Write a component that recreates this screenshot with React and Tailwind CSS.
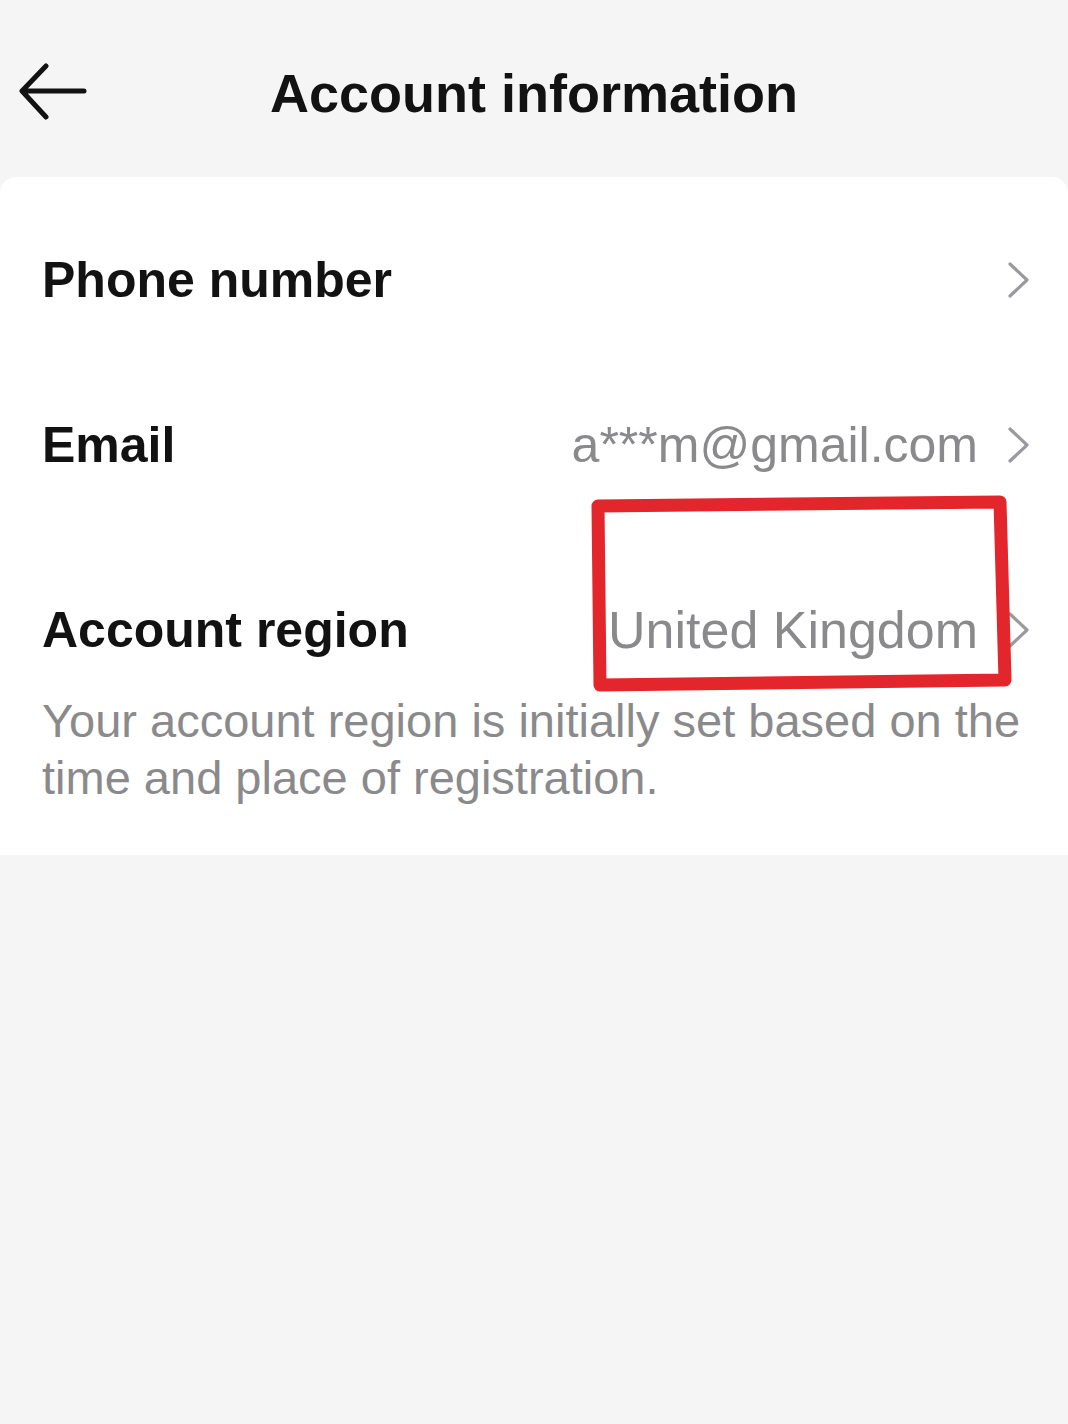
import React from 'react'

const font = { fontFamily: '"Liberation Sans", Arial, sans-serif' }

function Chevron() {
  return (
    <svg width="26" height="38" viewBox="0 0 26 38" fill="none" className="shrink-0">
      <polyline points="4,3 21,19 4,35" stroke="#9a9a9e" strokeWidth="3.2" strokeLinecap="round" strokeLinejoin="round" />
    </svg>
  )
}

function Row({ label, value, valueSize = 'text-[50px]', className = '' }) {
  return (
    <div className={`flex items-center justify-between pl-[42px] pr-[36px] ${className}`}>
      <span className="text-[50px] font-bold leading-none text-[#121212]">{label}</span>
      <div className="flex items-center gap-[28px]">
        {value && <span className={`${valueSize} leading-none text-[#8a8a8c]`}>{value}</span>}
        <Chevron />
      </div>
    </div>
  )
}

export default function App() {
  return (
    <div className="min-h-[1424px] w-full bg-[#f5f5f5]" style={font}>
      {/* header */}
      <div className="grid h-[177px] grid-cols-[1fr_auto_1fr] items-center pt-[8px]">
        <div className="pl-[18px]">
          <svg width="70" height="60" viewBox="0 0 70 60" fill="none">
            <path d="M66 28H5M28 3L4 28L28 54" stroke="#121212" strokeWidth="5" strokeLinecap="round" strokeLinejoin="round" />
          </svg>
        </div>
        <h1 className="text-[54px] font-bold leading-none text-[#121212]">Account information</h1>
        <div />
      </div>

      {/* panel */}
      <div className="relative rounded-t-[16px] bg-white pt-[20px] pb-[49px]">
        <Row label="Phone number" className="h-[165px]" />
        <Row label="Email" value="a***m@gmail.com" className="h-[165px]" />
        <Row label="Account region" value="United Kingdom" valueSize="text-[52px]" className="mt-[48px] h-[110px]" />
        <p className="mt-[7px] px-[42px] text-[47px] leading-[57px] text-[#8a8a8c]">
          Your account region is initially set based on the time and place of registration.
        </p>

        {/* hand-drawn highlight */}
        <svg className="pointer-events-none absolute left-[585px] top-[318px]" width="430" height="200" viewBox="0 0 430 200" fill="none">
          <path d="M13 11L415 7L420 185L15 190Z" stroke="#e3262b" strokeWidth="13" strokeLinejoin="round" />
        </svg>
      </div>
    </div>
  )
}
